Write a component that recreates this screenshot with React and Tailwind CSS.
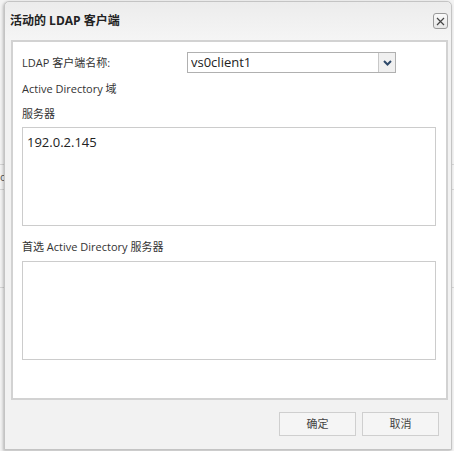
import { useState } from 'react';

const font = { fontFamily: '"Open Sans", "Noto Sans CJK SC", sans-serif' };

function Chevron() {
  return (
    <svg width="9" height="6" viewBox="0 0 9 6">
      <path d="M1 1 L4.5 4.5 L8 1" fill="none" stroke="#2f4a6b" strokeWidth="2" />
    </svg>
  );
}

export default function App() {
  const [client, setClient] = useState('vs0client1');
  const [servers, setServers] = useState('192.0.2.145');
  const [preferred, setPreferred] = useState('');

  return (
    <div className="relative w-[454px] h-[451px] overflow-hidden bg-[#f3f3f3] text-[#333]" style={font}>
      {/* page behind the dialog */}
      <div className="flex flex-col pt-[164px]">
        <div className="h-px bg-[#d6d6d6]" />
        <div className="h-[24px] text-[11px] leading-[24px] text-[#555] pl-0">ot</div>
        <div className="h-px bg-[#d6d6d6]" />
        <div className="h-[97px]" />
        <div className="h-px bg-[#d6d6d6]" />
      </div>

      {/* dialog */}
      <div className="absolute left-[4px] top-[1px] w-[448px] h-[449px] flex flex-col bg-[#f2f2f2] border border-[#c4c4c4] rounded-t-[5px] shadow-[-1px_1px_3px_rgba(0,0,0,0.25)]">
        <div className="h-[38px] flex items-center justify-between pl-[5px] pr-[3px] bg-gradient-to-b from-[#ececec] to-[#f5f5f5] rounded-t-[5px]">
          <span className="text-[12px] font-bold text-[#222] -mt-[1px]">活动的 LDAP 客户端</span>
          <button className="w-[15px] h-[16px] flex items-center justify-center border border-[#9a9a9a] rounded-[3px] bg-gradient-to-b from-[#fafafa] to-[#e6e6e6]">
            <svg width="9" height="9" viewBox="0 0 9 9">
              <path d="M1 1 L8 8 M8 1 L1 8" stroke="#444" strokeWidth="1.2" />
            </svg>
          </button>
        </div>

        <div className="ml-[6px] mr-[3px] h-[360px] bg-white border-2 border-[#d2d2d2] flex flex-col pl-[9px] pt-[10px]">
          <div className="h-[21px] flex items-center">
            <span className="w-[165px] text-[11px] leading-[16px]">LDAP 客户端名称:</span>
            <div className="w-[209px] h-[21px] flex border border-[#b0b0b0]">
              <input
                className="flex-1 min-w-0 px-[3px] text-[13px] text-[#222] outline-none"
                value={client}
                onChange={e => setClient(e.target.value)}
              />
              <div className="w-[17px] flex items-center justify-center bg-[#f0f0f0] border-l border-[#c8c8c8]">
                <Chevron />
              </div>
            </div>
          </div>

          <div className="mt-[8px] h-[16px] text-[11px] leading-[16px]">Active Directory 域</div>
          <div className="mt-[9px] h-[16px] text-[11px] leading-[16px]">服务器</div>
          <textarea
            className="mt-[5px] w-[414px] h-[99px] border border-[#cccccc] px-[4px] py-[5px] text-[13px] leading-[18px] text-[#222] resize-none outline-none"
            value={servers}
            onChange={e => setServers(e.target.value)}
          />

          <div className="mt-[13px] h-[16px] text-[11px] leading-[16px]">首选 Active Directory 服务器</div>
          <textarea
            className="mt-[6px] w-[414px] h-[99px] border border-[#cccccc] px-[4px] py-[5px] text-[13px] leading-[18px] resize-none outline-none"
            value={preferred}
            onChange={e => setPreferred(e.target.value)}
          />
        </div>

        <div className="flex-1 flex justify-end items-start gap-[6px] pt-[12px] pr-[12px]">
          <button className="w-[77px] h-[24px] bg-[#f5f5f5] border border-[#cfcfcf] text-[11px] text-[#444]">确定</button>
          <button className="w-[77px] h-[24px] bg-[#f5f5f5] border border-[#cfcfcf] text-[11px] text-[#444]">取消</button>
        </div>
      </div>
    </div>
  );
}
